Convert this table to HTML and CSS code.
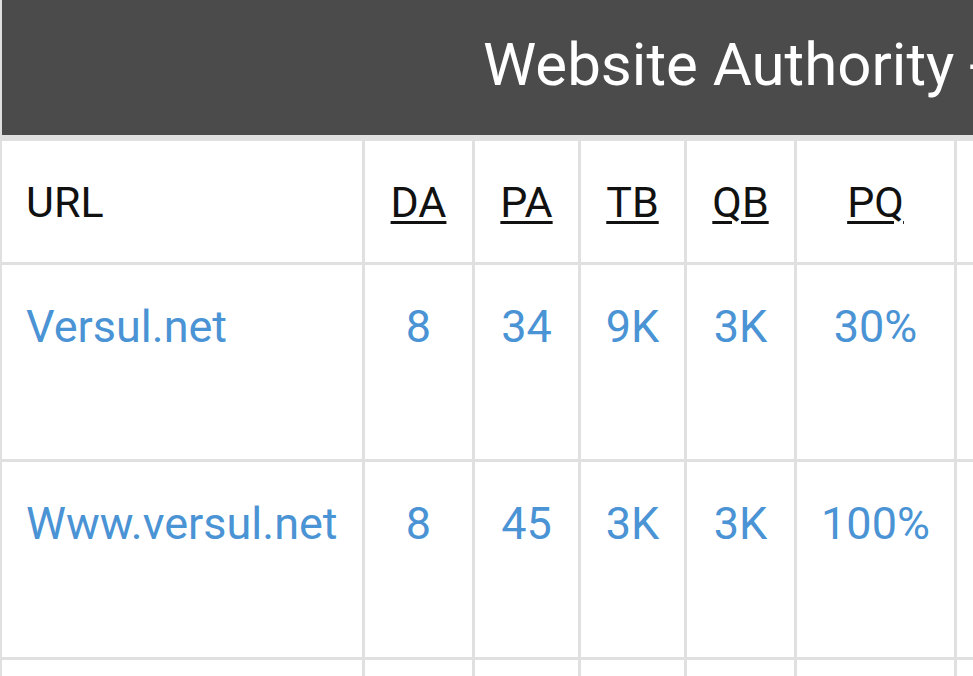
FILE: index.html
```html
<!DOCTYPE html>
<html lang="en">
<head>
<meta charset="utf-8">
<title>Website Authority</title>
<link rel="stylesheet" href="styles.css">
</head>
<body>
<div class="page">
  <div class="title"><span class="title-text">Website Authority - Versul.net</span></div>
  <div class="grid">
    <div class="th th-url">URL</div>
    <div class="th"><abbr>DA</abbr></div>
    <div class="th"><abbr>PA</abbr></div>
    <div class="th"><abbr>TB</abbr></div>
    <div class="th"><abbr>QB</abbr></div>
    <div class="th"><abbr>PQ</abbr></div>
    <div class="th"></div>

    <div class="td td-url"><a href="#">Versul.net</a></div>
    <div class="td">8</div>
    <div class="td">34</div>
    <div class="td">9K</div>
    <div class="td">3K</div>
    <div class="td">30%</div>
    <div class="td"></div>

    <div class="td td-url"><a href="#">Www.versul.net</a></div>
    <div class="td">8</div>
    <div class="td">45</div>
    <div class="td">3K</div>
    <div class="td">3K</div>
    <div class="td">100%</div>
    <div class="td"></div>

    <div class="td td-url"></div>
    <div class="td"></div>
    <div class="td"></div>
    <div class="td"></div>
    <div class="td"></div>
    <div class="td"></div>
    <div class="td"></div>
  </div>
</div>
</body>
</html>
```

FILE: styles.css
```css
html, body {
  margin: 0;
  padding: 0;
  background: #ffffff;
  overflow: hidden;
}

body {
  font-family: Roboto, "Noto Sans", "Liberation Sans", sans-serif;
}

.page {
  width: max-content;
  background: #e0e0e0;
  padding-left: 2px;
}

.title {
  height: 135px;
  box-sizing: border-box;
  background: #4b4b4b;
  color: #ffffff;
  font-size: 60px;
  line-height: normal;
  padding-top: 29px;
  padding-left: 481px;
  white-space: nowrap;
  overflow: hidden;
}

.grid {
  display: grid;
  grid-template-columns: 360px 107px 103px 103px 107px 157px 140px;
  grid-template-rows: 121px 194px 195px 100px;
  gap: 3px;
  padding-top: 6px;
}

.th,
.td {
  background: #ffffff;
}

.th {
  display: flex;
  align-items: center;
  justify-content: center;
  font-size: 43px;
  color: #111111;
}

.th-url {
  justify-content: flex-start;
  padding-left: 24px;
}

.th abbr {
  text-decoration: underline;
  text-decoration-thickness: 3px;
  text-underline-offset: 4px;
}

.td {
  font-size: 45px;
  line-height: normal;
  color: #4a93d4;
  text-align: center;
  padding-top: 35px;
  box-sizing: border-box;
}

.td-url {
  text-align: left;
  padding-left: 24px;
}

.td a {
  color: #4a93d4;
  text-decoration: none;
}
```
